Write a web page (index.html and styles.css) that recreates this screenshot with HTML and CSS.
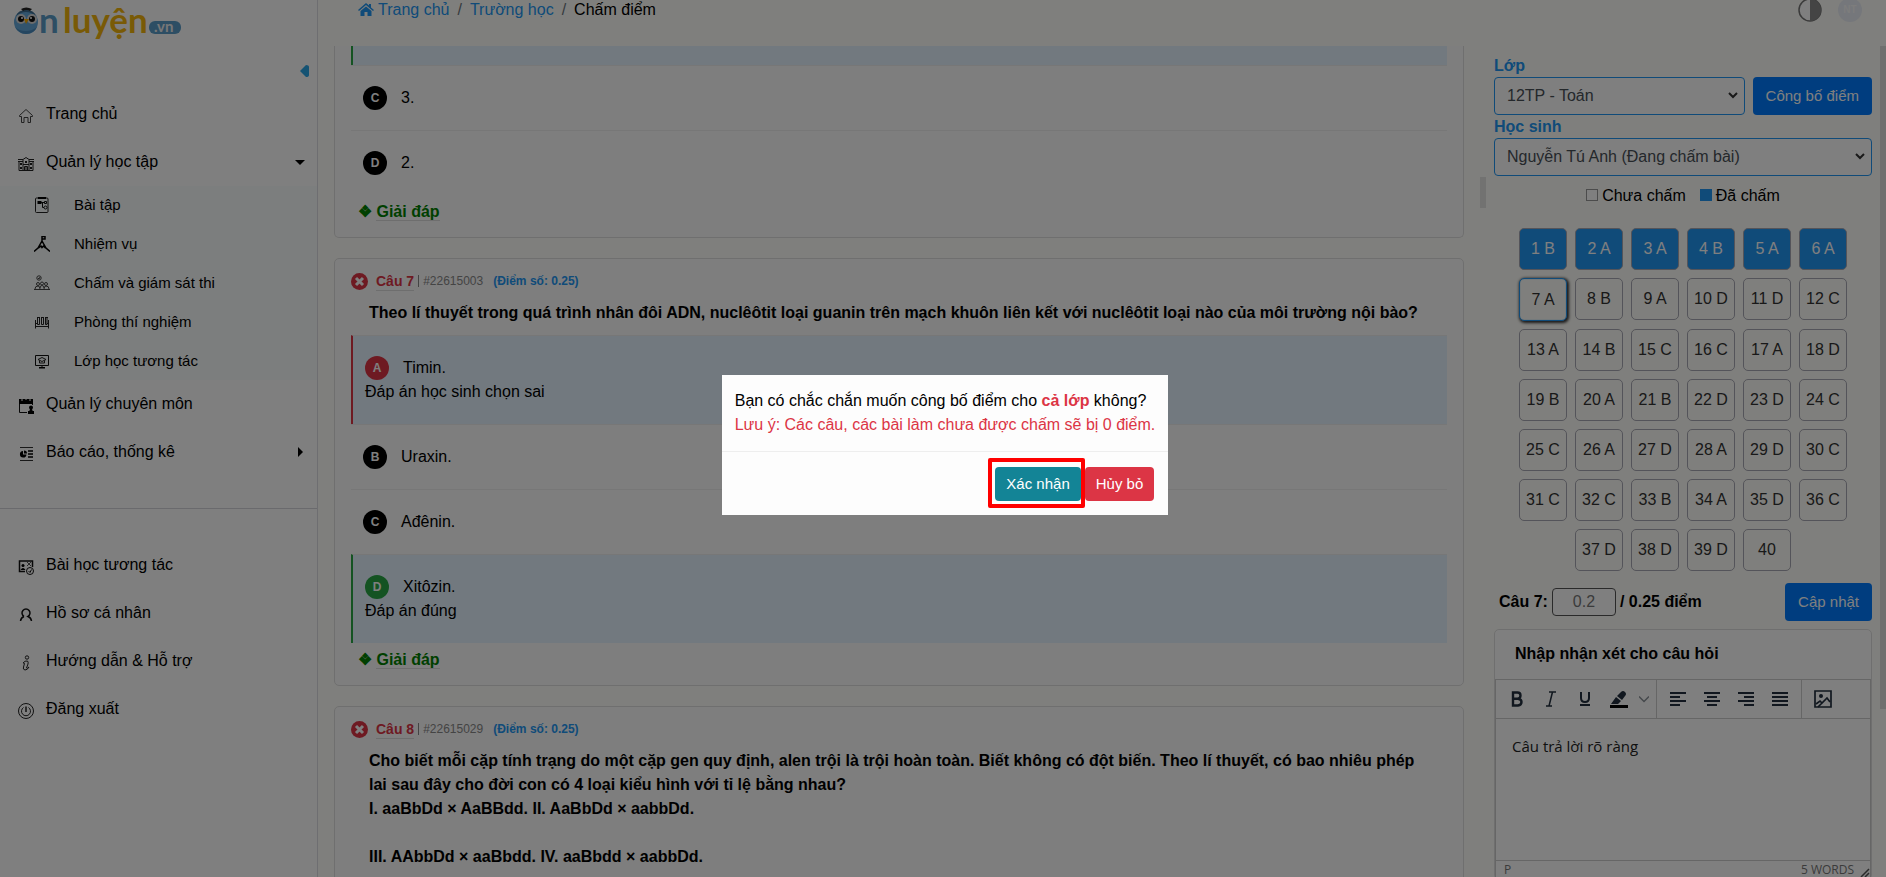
FILE: index.html
```
<!DOCTYPE html>
<html lang="vi">
<head>
    <meta charset="utf-8">
    <title>Chấm điểm</title>
    <link rel="stylesheet" href="styles.css">
</head>
<body>
    <div class="page">
        <aside class="sidebar">
            <a class="logo" href="#" aria-label="Ôn luyện">
                <svg width="170" height="46" viewBox="0 0 170 46">
                    <circle cx="12" cy="22" r="12" fill="#64a8da"/>
                    <path d="M2 16Q12 8 22 16Q20 10 12 10Q4 10 2 16Z" fill="#3f6f93"/>
                    <path d="M7 9Q12 6 18 9L16 11Q12 9 9 11Z" fill="#222"/>
                    <circle cx="7" cy="19" r="5" fill="#d8d8d8"/>
                    <circle cx="18" cy="19" r="5" fill="#d8d8d8"/>
                    <circle cx="7" cy="19" r="3" fill="#111"/>
                    <circle cx="18" cy="19" r="3" fill="#111"/>
                    <circle cx="8" cy="18" r="1" fill="#fff"/>
                    <circle cx="17" cy="18" r="1" fill="#fff"/>
                    <path d="M10 19L15 19L12 24Z" fill="#f5a800"/>
                    <path d="M1 27Q5 34 12 34Q20 34 23 27Q18 31 12 31Q5 31 1 27Z" fill="#4a8dc0"/>
                    <text class="logo-n" x="25" y="33">n</text>
                    <text class="logo-l" x="49" y="33">luyện</text>
                    <rect x="135" y="21" width="32" height="13" rx="6" fill="#5a9cc8"/>
                    <text class="logo-vn" x="140" y="32">.vn</text>
                </svg>
            </a>
            <button class="collapse" aria-label="Thu gọn">
                <svg width="9" height="12" viewBox="0 0 9 12"><path d="M0 6L6 0Q9 0 9 2V10Q9 12 6 12Z" fill="#2ba7e6"/></svg>
            </button>
            <nav>
                <a class="item" href="#">
                    <svg class="ico" viewBox="0 0 16 16"><path d="M1.500 8.500V7.500L8 1.500L14.500 7.500V8.500H12.500V14.500H10V9.500H6V14.500H3.500V8.500Z" fill="none" stroke="#444"/></svg>
                    Trang chủ
                </a>
                <a class="item" href="#">
                    <svg class="ico" viewBox="0 0 16 16"><path d="M1 5V14.500H15V5M0 3.500H5L8 1.500L11 3.500H16M0 5.500H5M11 5.500H16M5 4V14M11 4V14M6.500 14V10.500H9.500V14M8 10V14" fill="none" stroke="#222"/><path d="M2 7H4V9H2ZM2 11H4V13H2ZM12 7H14V9H12ZM12 11H14V13H12ZM7 5H9V7H7ZM5 8H11V9H5Z" fill="#222"/></svg>
                    Quản lý học tập
                    <span class="caret down"></span>
                </a>
                <div class="sub">
                    <a class="item" href="#">
                        <svg class="ico" viewBox="0 0 16 16"><rect x="1.500" y="1" width="12.500" height="14.500" rx="1" fill="none" stroke="#222"/><path d="M4 0H12V2H4ZM3.500 4H7.500V7H3.500Z"/><path d="M7 5.500H10M8.500 6V10.500H10" fill="none" stroke="#111"/><path d="M10.500 4.500H12.500V6.500H10.500Z" fill="none" stroke="#111"/><circle cx="11.500" cy="10.500" r="1.500" fill="none" stroke="#111"/></svg>
                        Bài tập
                    </a>
                    <a class="item" href="#">
                        <svg class="ico" viewBox="0 0 16 16"><path d="M0 15.500L4 12L8 5L12 12L16 15.500M8 6V.5H11V3H8M4.500 12L7 10L8 11.500L9.500 10L11.500 12" fill="none" stroke="#000" stroke-width="1.500"/></svg>
                        Nhiệm vụ
                    </a>
                    <a class="item" href="#">
                        <svg class="ico" viewBox="0 0 16 16"><g fill="none" stroke="#444"><circle cx="5" cy="3" r="2.200"/><path d="M4 3L5 4L6 2"/><circle cx="4" cy="9" r="1.500"/><circle cx="8" cy="8.500" r="1.500"/><circle cx="12" cy="9" r="1.500"/><path d="M1 14Q1 11 4 11Q6 11 6 14M6 13Q6 10.500 8 10.500Q10 10.500 10 13M10 14Q10 11 12 11Q15 11 15 14M0 14.500H16"/></g></svg>
                        Chấm và giám sát thi
                    </a>
                    <a class="item" href="#">
                        <svg class="ico" viewBox="0 0 16 16"><path d="M1.500 6V14.500M14.500 6V14.500M1 12.500H15M1 9.500H3M13 9.500H15M3.500 3V10.500H5.500V3M7.500 3V10.500H9.500V3M11.500 3V10.500H13V3M3 3.500H6M7 3.500H10M11 3.500H14" fill="none" stroke="#222"/></svg>
                        Phòng thí nghiệm
                    </a>
                    <a class="item" href="#">
                        <svg class="ico" viewBox="0 0 16 16"><path d="M1.500 2.500H14.500V12.500H1.500ZM8 12.500V14.500" fill="none" stroke="#111"/><path d="M5 14H11V15.500H5Z"/><path d="M4 6.500L8 4.500L12 6.500L8 8.500ZM5.500 7.500V10H10.500V7.500" fill="none" stroke="#222"/></svg>
                        Lớp học tương tác
                    </a>
                </div>
                <a class="item" href="#">
                    <svg class="ico" viewBox="0 0 16 16"><path d="M1 1H15V6H1ZM10 13H16V16H10Z"/><circle cx="13" cy="9.500" r="2"/><path d="M11 14L12 11H14L15 14Z"/><path d="M1.500 6V14.500H9M14.500 6V7" fill="none" stroke="#111"/><path d="M4 0V3M8 0V2M12 0V3" stroke="#fff"/></svg>
                    Quản lý chuyên môn
                </a>
                <a class="item" href="#">
                    <svg class="ico" viewBox="0 0 16 16"><path d="M2 1.500H15M2 14.500H15" stroke="#333"/><path d="M10 5H15M10 8H15M10 11H15" stroke="#000" stroke-width="1.500"/><path d="M5 5V8.500H8.500A3.300 3.300 0 1 1 5 5ZM6 4.500A3 3 0 0 1 9 7.500H6Z"/></svg>
                    Báo cáo, thống kê
                    <span class="caret right"></span>
                </a>
                <hr>
                <a class="item" href="#">
                    <svg class="ico" viewBox="0 0 16 16"><g fill="none" stroke="#111"><path d="M7 12.500H1.500V2H14.500V8" stroke-width="1.500"/><path d="M9 3L13 7M13 3L9 7" stroke="#555"/><circle cx="12" cy="12" r="3.500"/><path d="M10.500 12L12 13.500L13.500 10.500"/></g><circle cx="5" cy="6.500" r="1.500"/><path d="M2.500 11Q5 7 7.500 11Z"/></svg>
                    Bài học tương tác
                </a>
                <a class="item" href="#">
                    <svg class="ico" viewBox="0 0 16 16"><path d="M6 9.500A4 4 0 1 1 10 9.500Q13 10.500 13.500 14M6 9.500Q3 10.500 2.500 14" fill="none" stroke="#111" stroke-width="1.500"/></svg>
                    Hồ sơ cá nhân
                </a>
                <a class="item" href="#">
                    <svg class="ico" viewBox="0 0 16 16"><g fill="none" stroke="#222"><circle cx="9" cy="2.500" r="1.700"/><path d="M5 8Q7 5.500 9.500 6Q10.500 7 10 9L8.500 13Q9 14 11 12Q9.500 15 7 15Q4.500 14.500 5.500 12L6.500 8.500Q6 8 5 8Z"/></g></svg>
                    Hướng dẫn &amp; Hỗ trợ
                </a>
                <a class="item" href="#">
                    <svg class="ico" viewBox="0 0 16 16"><g fill="none" stroke="#222"><circle cx="8" cy="8" r="7.500"/><path d="M5.500 4.500A4.500 4.500 0 1 0 10.500 4.500"/><path d="M8 3.500V9" stroke-width="1.500"/></g></svg>
                    Đăng xuất
                </a>
            </nav>
        </aside>

        <div class="content">
            <header class="topbar">
                <div class="crumbs">
                    <svg width="16" height="14" viewBox="0 0 16 14"><path d="M0 7L8 0L11 2.600V1H13V4.400L16 7L15 8L8 2L1 8ZM2.500 8L8 3.400L13.500 8V13H9.500V9H6.500V13H2.500Z" fill="#2196f3"/></svg>
                    <a href="#">Trang chủ</a><i>/</i><a href="#">Trường học</a><i>/</i><span>Chấm điểm</span>
                </div>
                <div class="tools">
                    <svg width="24" height="24" viewBox="0 0 24 24"><circle cx="12" cy="12" r="11" fill="#fff" stroke="#777" stroke-width="1.500"/><path d="M12 1A11 11 0 0 1 12 23Z" fill="#888"/></svg>
                    <span class="avatar">NT</span>
                </div>
            </header>

            <div class="body">
                <main class="questions">
                    <section class="card cut">
                        <ul class="answers">
                            <li class="right tail"></li>
                            <li><b>C</b>3.</li>
                            <li><b>D</b>2.</li>
                        </ul>
                        <div class="explain">❖ <a href="#">Giải đáp</a></div>
                    </section>

                    <section class="card">
                        <div class="head">
                            <svg width="17" height="17" viewBox="0 0 17 17"><circle cx="8.500" cy="8.500" r="8.500" fill="#dc3545"/><path d="M5 5L12 12M12 5L5 12" stroke="#fff" stroke-width="3"/></svg>
                            <a href="#">Câu 7</a><span class="code">#22615003</span><span class="point">(Điểm số: 0.25)</span>
                        </div>
                        <div class="text">Theo lí thuyết trong quá trình nhân đôi ADN, nuclêôtit loại guanin trên mạch khuôn liên kết với nuclêôtit loại nào của môi trường nội bào?</div>
                        <ul class="answers">
                            <li class="wrong"><b>A</b>Timin.<p>Đáp án học sinh chọn sai</p></li>
                            <li><b>B</b>Uraxin.</li>
                            <li><b>C</b>Ađênin.</li>
                            <li class="right"><b>D</b>Xitôzin.<p>Đáp án đúng</p></li>
                        </ul>
                        <div class="explain">❖ <a href="#">Giải đáp</a></div>
                    </section>

                    <section class="card">
                        <div class="head">
                            <svg width="17" height="17" viewBox="0 0 17 17"><circle cx="8.500" cy="8.500" r="8.500" fill="#dc3545"/><path d="M5 5L12 12M12 5L5 12" stroke="#fff" stroke-width="3"/></svg>
                            <a href="#">Câu 8</a><span class="code">#22615029</span><span class="point">(Điểm số: 0.25)</span>
                        </div>
                        <div class="text">Cho biết mỗi cặp tính trạng do một cặp gen quy định, alen trội là trội hoàn toàn. Biết không có đột biến. Theo lí thuyết, có bao nhiêu phép lai sau đây cho đời con có 4 loại kiểu hình với tỉ lệ bằng nhau?<br>I. aaBbDd × AaBBdd. II. AaBbDd × aabbDd.<br><br>III. AAbbDd × aaBbdd. IV. aaBbdd × aabbDd.</div>
                    </section>
                </main>

                <aside class="panel">
                    <div class="grip"></div>
                    <div class="marking">
                        <label class="lab" for="class">Lớp</label>
                        <div class="line">
                            <div class="drop">
                                <select id="class"><option>12TP - Toán</option></select>
                                <svg width="10" height="7" viewBox="0 0 10 7"><path d="M1 1L5 5L9 1" fill="none" stroke="#333" stroke-width="2"/></svg>
                            </div>
                            <button class="btn primary">Công bố điểm</button>
                        </div>
                        <label class="lab" for="student">Học sinh</label>
                        <div class="drop">
                            <select id="student"><option>Nguyễn Tú Anh (Đang chấm bài)</option></select>
                            <svg width="10" height="7" viewBox="0 0 10 7"><path d="M1 1L5 5L9 1" fill="none" stroke="#333" stroke-width="2"/></svg>
                        </div>
                        <div class="legend">
                            <span>Chưa chấm</span>
                            <span class="done">Đã chấm</span>
                        </div>
                        <div class="numbers" id="numbers"></div>
                        <div class="score">
                            <label for="score">Câu 7:</label>
                            <input id="score" type="text" value="0.2">
                            <span>/ 0.25 điểm</span>
                            <button class="btn primary">Cập nhật</button>
                        </div>
                        <div class="comment">
                            <h3>Nhập nhận xét cho câu hỏi</h3>
                            <div class="editor">
                                <div class="toolbar">
                                    <div class="group">
                                        <button aria-label="Đậm"><svg width="24" height="24" viewBox="0 0 24 24"><path d="M8 5.500H12.500Q15.500 5.500 15.500 8.500T12.500 11.700H8ZM8 11.700H13Q16.500 12 16.500 15T13 18.500H8Z" fill="none" stroke="#222f3e" stroke-width="2.400"/></svg></button>
                                        <button aria-label="Nghiêng"><svg width="24" height="24" viewBox="0 0 24 24"><path d="M10 5H17M7 19H13M13.500 5L10 19" fill="none" stroke="#222f3e" stroke-width="1.500"/></svg></button>
                                        <button aria-label="Gạch chân"><svg width="24" height="24" viewBox="0 0 24 24"><path d="M8 5V11Q8 15 12 15T16 11V5M7 18H17" fill="none" stroke="#222f3e" stroke-width="2"/></svg></button>
                                        <button aria-label="Màu nền"><svg width="24" height="24" viewBox="0 0 24 24"><path d="M3 18H21V21H3Z"/><path d="M4 17L9 10L14 14L11 17ZM10 9L14 5Q16 3 18 5T18 9L15 13Z" fill="#222f3e"/></svg></button>
                                        <button class="small" aria-label="Chọn màu"><svg width="10" height="10" viewBox="0 0 10 10"><path d="M0 2.500L5 7.500L10 2.500" fill="none" stroke="#8b9198" stroke-width="1.500"/></svg></button>
                                    </div>
                                    <div class="group">
                                        <button aria-label="Căn trái"><svg width="24" height="24" viewBox="0 0 24 24"><path d="M4 6H20M4 10H14M4 14H20M4 18H14" stroke="#222f3e" stroke-width="2"/></svg></button>
                                        <button aria-label="Căn giữa"><svg width="24" height="24" viewBox="0 0 24 24"><path d="M4 6H20M7 10H17M4 14H20M7 18H17" stroke="#222f3e" stroke-width="2"/></svg></button>
                                        <button aria-label="Căn phải"><svg width="24" height="24" viewBox="0 0 24 24"><path d="M4 6H20M10 10H20M4 14H20M10 18H20" stroke="#222f3e" stroke-width="2"/></svg></button>
                                        <button aria-label="Căn đều"><svg width="24" height="24" viewBox="0 0 24 24"><path d="M4 6H20M4 10H20M4 14H20M4 18H20" stroke="#222f3e" stroke-width="2"/></svg></button>
                                    </div>
                                    <div class="group">
                                        <button aria-label="Chèn ảnh"><svg width="24" height="24" viewBox="0 0 24 24"><g fill="none" stroke="#222f3e" stroke-width="1.700"><path d="M4 4H20V20H4Z"/><path d="M5 17L9 14L11 16L16 11L19 15M7 20L11 16"/></g><circle cx="10" cy="9" r="2" fill="#222f3e"/></svg></button>
                                    </div>
                                </div>
                                <textarea aria-label="Nhận xét">Câu trả lời rõ ràng</textarea>
                                <div class="status">
                                    <span>P</span>
                                    <span>5 WORDS</span>
                                    <svg width="10" height="10" viewBox="0 0 10 10"><path d="M1 9L9 1M5 9L9 5" stroke="#555" stroke-width="1.500"/></svg>
                                </div>
                            </div>
                        </div>
                    </div>
                    <div class="bar"></div>
                </aside>
            </div>
        </div>
    </div>

    <div class="overlay">
        <div class="modal" role="dialog">
            <div class="msg">
                <p>Bạn có chắc chắn muốn công bố điểm cho <strong>cả lớp</strong> không?</p>
                <p class="note">Lưu ý: Các câu, các bài làm chưa được chấm sẽ bị 0 điểm.</p>
            </div>
            <div class="actions">
                <button class="btn confirm">Xác nhận</button>
                <button class="btn cancel">Hủy bỏ</button>
            </div>
        </div>
    </div>

    <script>
        let answers = 'BAABAA' + 'ABADDC' + 'ABCCAD' + 'BABDDC' + 'CADADC' + 'CCBADC' + 'DDD';
        let numbers = document.getElementById('numbers');

        for (let i = 1; i <= 40; i++) {
            let button = document.createElement('button');
            button.textContent = i + ' ' + (answers[i - 1] || '');
            if (i <= 6) {
                button.className = 'done';
            } else if (i === 7) {
                button.className = 'current';
            }
            numbers.appendChild(button);
        }
    </script>
</body>
</html>
```
FILE: styles.css
```
* {
    box-sizing: border-box;
    margin: 0;
    padding: 0;
}

body {
    font: 16px/24px "Liberation Sans", Arial, sans-serif;
    color: #000;
    background-color: #fffffa;
}

a {
    color: inherit;
    text-decoration: none;
}

button, input, select, textarea {
    font: inherit;
}

.page {
    display: flex;
    height: 100vh;
    overflow: hidden;
}

/* sidebar */

.sidebar {
    flex: none;
    display: flex;
    flex-direction: column;
    width: 318px;
    background-color: #fff;
    border-right: 1px solid #dcdce2;
}

.logo {
    height: 46px;
    padding-left: 14px;
}

.logo svg {
    display: block;
    overflow: visible;
}

.logo text {
    font-family: Lato, sans-serif;
    font-weight: 700;
}

.logo .logo-n {
    font-size: 35px;
    fill: #5a9cc8;
}

.logo .logo-l {
    font-size: 35px;
    fill: #f2b50c;
}

.logo .logo-vn {
    font-size: 15px;
    fill: #eee;
}

.collapse {
    align-self: flex-end;
    display: flex;
    align-items: center;
    height: 44px;
    padding: 6px 8px 0 0;
    border: 0;
    background: none;
}

.item {
    display: flex;
    align-items: center;
    height: 48px;
    padding: 0 12px 0 18px;
}

.ico {
    flex: none;
    width: 16px;
    height: 16px;
    margin: 3px 12px 0 0;
}

.caret {
    margin-left: auto;
    border: 5px solid transparent;
}

.caret.down {
    border-top-color: #000;
    border-bottom: 0;
}

.caret.right {
    margin-right: 2px;
    border-left-color: #000;
    border-right: 0;
}

.sub {
    height: 194px;
    background-color: #f9fdfc;
    font-size: 15px;
}

.sub .item {
    height: 20%;
    padding-left: 34px;
}

.sub .ico {
    margin: 0 24px 0 0;
}

.sidebar hr {
    margin: 32px 0;
    border: 0;
    border-top: 1px solid #d4d4da;
}

/* top bar */

.content {
    flex: 1;
    display: flex;
    flex-direction: column;
    min-width: 0;
}

.topbar {
    flex: none;
    display: flex;
    justify-content: space-between;
    height: 46px;
    padding: 0 24px 26px 40px;
}

.crumbs, .tools {
    display: flex;
    align-items: center;
    height: 20px;
}

.crumbs a {
    color: #2196f3;
}

.crumbs svg {
    margin-right: 4px;
}

.crumbs i {
    margin: 0 8px;
    font-style: normal;
    color: #6c757d;
}

.tools {
    gap: 16px;
}

.avatar {
    width: 24px;
    height: 24px;
    border-radius: 50%;
    background-color: #eaeef6;
    color: #fafafa;
    font-size: 10px;
    font-weight: bold;
    text-align: center;
}

.body {
    flex: 1;
    display: flex;
    min-height: 0;
}

/* questions */

.questions {
    flex: 1;
    min-width: 0;
    padding-left: 16px;
    overflow: hidden;
}

.card {
    margin-bottom: 20px;
    padding: 10px 16px 13px;
    border: 1px solid #dfdfdf;
    border-radius: 5px;
    background-color: #fcfcfc;
}

.card.cut {
    padding-top: 0;
    border-top: 0;
    border-radius: 0 0 5px 5px;
}

.head {
    display: flex;
    align-items: center;
    height: 24px;
    font-size: 12px;
}

.head a {
    margin: 0 4px 0 8px;
    border-bottom: 1px solid #ddd;
    color: #dc3545;
    font-size: 14px;
    line-height: 18px;
    font-weight: bold;
}

.code {
    padding-left: 4px;
    border-left: 1px solid #888;
    color: #888;
    line-height: 12px;
}

.point {
    margin-left: 10px;
    color: #2196f3;
    font-weight: bold;
}

.text {
    padding: 8px 18px 10px;
    font-weight: bold;
}

.answers {
    list-style: none;
}

.answers li {
    padding: 20px 12px;
    border-top: 1px solid #eee;
}

.answers b {
    display: inline-block;
    width: 24px;
    height: 24px;
    margin-right: 14px;
    border-radius: 50%;
    background-color: #000;
    color: #fff;
    font-size: 12px;
    text-align: center;
    vertical-align: top;
}

.answers .wrong, .answers .right {
    border-left: 2px solid #dc3545;
    background-color: #e4f3ff;
}

.answers .right {
    border-left-color: #28a745;
}

.answers .wrong b {
    background-color: #dc3545;
}

.answers .right b {
    background-color: #28a745;
}

.answers .tail {
    height: 19px;
    padding: 0;
    border-top: 0;
}

.explain {
    padding: 5px 0 0 7px;
    color: #008000;
    font-weight: bold;
}

.explain a {
    border-bottom: 1px solid #ddd;
}

/* marking panel */

.panel {
    flex: none;
    display: flex;
    width: 422px;
}

.grip {
    align-self: flex-start;
    width: 6px;
    height: 31px;
    margin: 131px 8px 0 16px;
    background-color: #e4e4e2;
}

.marking {
    flex: 1;
    display: flex;
    flex-direction: column;
    min-width: 0;
    padding-top: 8px;
}

.lab {
    color: #2196f3;
    font-weight: bold;
    line-height: 23px;
}

.line {
    display: flex;
    gap: 8px;
}

.drop {
    position: relative;
    flex: 1 0 38px;
}

.drop select {
    display: block;
    width: 100%;
    height: 38px;
    padding: 0 12px;
    border: 1px solid #2196f3;
    border-radius: 4px;
    background-color: #fff;
    color: #495057;
    appearance: none;
}

.drop svg {
    position: absolute;
    right: 7px;
    top: 15px;
}

.marking > .drop {
    flex: none;
}

.btn {
    border: 0;
    border-radius: 4px;
    color: #fff;
    font-size: 15px;
    font-weight: normal;
}

.primary {
    height: 38px;
    padding: 0 13px;
    background-color: #007bff;
}

.legend {
    display: flex;
    justify-content: center;
    gap: 14px;
    margin: 8px 0 20px;
}

.legend span::before {
    content: "";
    display: inline-block;
    width: 10px;
    height: 10px;
    margin-right: 4px;
    border: 1px solid #999;
    background-color: #fff;
}

.legend .done::before {
    border-color: #2196f3;
    background-color: #2196f3;
}

.numbers {
    display: flex;
    flex-wrap: wrap;
    justify-content: center;
    align-items: flex-start;
    gap: 8px;
    padding: 0 21px;
}

.numbers button {
    width: 48px;
    height: 42px;
    border: 1px solid #a9a9b4;
    border-radius: 5px;
    background-color: #fffffa;
    color: #333;
}

.numbers .done {
    background-color: #2196f3;
    color: #fff;
}

.numbers .current {
    height: 43px;
    border-color: #2196f3;
    box-shadow: 1px 1px 3px 1px #333, inset 0 0 1px #2196f3;
}

.score {
    display: flex;
    align-items: center;
    margin: 12px 0 8px;
    padding-left: 5px;
    font-weight: bold;
}

.score input {
    width: 64px;
    height: 28px;
    margin: 0 4px;
    border: 1px solid #555;
    border-radius: 4px;
    background-color: #fff;
    color: #777;
    font-weight: normal;
    text-align: center;
}

.score .btn {
    margin-left: auto;
}

.comment {
    border: 1px solid #dfdfdf;
    border-radius: 5px;
    background-color: #fff;
}

.comment h3 {
    height: 49px;
    padding-left: 20px;
    font-size: 16px;
    line-height: 48px;
}

.editor {
    border: 1px solid #ccc;
}

.toolbar {
    display: flex;
    border-bottom: 1px solid #ccc;
}

.group {
    display: flex;
    height: 38px;
    padding: 2px 4px;
    border-right: 1px solid #ccc;
}

.group:last-child {
    border-right: 0;
}

.toolbar button {
    display: flex;
    align-items: center;
    justify-content: center;
    width: 34px;
    border: 0;
    background: none;
}

.toolbar .small {
    width: 16px;
}

.editor textarea {
    display: block;
    width: 100%;
    height: 141px;
    padding: 15px 16px;
    border: 0;
    background: none;
    color: #222;
    font: 15px/24px "Open Sans", sans-serif;
    resize: none;
}

.status {
    display: flex;
    align-items: center;
    gap: 6px;
    height: 18px;
    padding-left: 8px;
    border-top: 1px solid #ccc;
    color: #777;
    font: 12px/16px "Open Sans", sans-serif;
}

.status span:first-child {
    margin-right: auto;
}

.status svg {
    align-self: flex-end;
}

.bar {
    width: 6px;
    height: 663px;
    margin-left: 8px;
    background-color: #e0e0de;
}

/* confirm dialog */

.overlay {
    position: fixed;
    inset: 0;
    display: flex;
    align-items: center;
    justify-content: center;
    padding: 13px 0 0 4px;
    background-color: rgba(0, 0, 0, 0.5);
}

.modal {
    background-color: #fdfdfd;
}

.msg {
    padding: 14px 13px;
    border-bottom: 1px solid #eee;
}

.msg strong, .note {
    color: #dc3545;
}

.actions {
    display: flex;
    justify-content: flex-end;
    gap: 4px;
    padding: 15px 14px 14px;
}

.actions .btn {
    position: relative;
    height: 34px;
    padding: 0 11px;
}

.confirm {
    background-color: #138496;
}

.confirm::after {
    content: "";
    position: absolute;
    inset: -9px -4px -7px -7px;
    border: 4px solid #f00;
    border-radius: 2px;
}

.cancel {
    background-color: #dc3545;
}
```
